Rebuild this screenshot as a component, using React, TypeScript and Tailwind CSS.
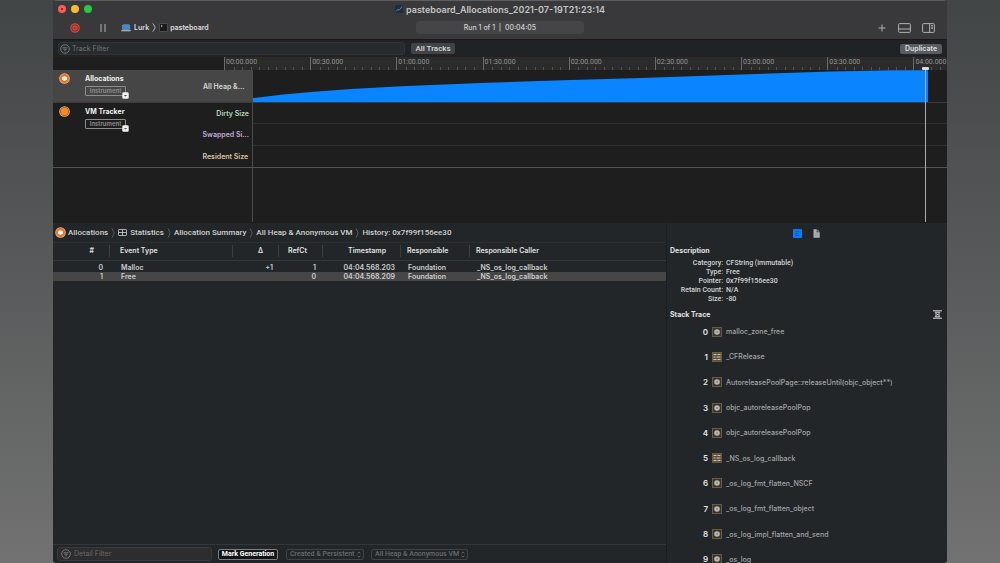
import React from "react";

type Frame = { symbol: string; kind: "system" | "library" };

const frames: Frame[] = [
  { symbol: "malloc_zone_free", kind: "system" },
  { symbol: "_CFRelease", kind: "library" },
  { symbol: "AutoreleasePoolPage::releaseUntil(objc_object**)", kind: "system" },
  { symbol: "objc_autoreleasePoolPop", kind: "system" },
  { symbol: "objc_autoreleasePoolPop", kind: "system" },
  { symbol: "_NS_os_log_callback", kind: "library" },
  { symbol: "_os_log_fmt_flatten_NSCF", kind: "system" },
  { symbol: "_os_log_fmt_flatten_object", kind: "system" },
  { symbol: "_os_log_impl_flatten_and_send", kind: "system" },
  { symbol: "_os_log", kind: "system" },
];

const marks = [
  "00:00.000",
  "00:30.000",
  "01:00.000",
  "01:30.000",
  "02:00.000",
  "02:30.000",
  "03:00.000",
  "03:30.000",
  "04:00.000",
];

const details = [
  ["Category:", "CFString (immutable)"],
  ["Type:", "Free"],
  ["Pointer:", "0x7f99f156ee30"],
  ["Retain Count:", "N/A"],
  ["Size:", "-80"],
];

const events = [
  { id: 0, type: "Malloc", delta: "+1", ref: 1, time: "04:04.568.203", lib: "Foundation", caller: "_NS_os_log_callback" },
  { id: 1, type: "Free", delta: "", ref: 0, time: "04:04.568.209", lib: "Foundation", caller: "_NS_os_log_callback" },
];

function FilterIcon() {
  return (
    <svg className="size-[10px] shrink-0" viewBox="0 0 10 10" fill="none" stroke="#87898b" strokeWidth="0.8" aria-hidden="true">
      <circle cx="5" cy="5" r="4.3" />
      <path d="M2.6 3.8h4.8M3.4 5.3h3.2M4.3 6.8h1.4" />
    </svg>
  );
}

function AllocationsIcon() {
  return (
    <svg className="size-[11px] shrink-0" viewBox="0 0 11 11" aria-hidden="true">
      <circle cx="5.5" cy="5.5" r="5.3" fill="#f3b27e" />
      <circle cx="5.5" cy="5.5" r="4.5" fill="#e27a30" />
      <path d="M5.5 3.2l2.4 1v2.5l-2.4 1.2-2.4-1.2V4.2z" fill="#fff3e6" />
    </svg>
  );
}

function TrackerIcon() {
  return (
    <svg className="size-[11px] shrink-0" viewBox="0 0 11 11" aria-hidden="true">
      <circle cx="5.5" cy="5.5" r="5.3" fill="#f5b784" />
      <circle cx="5.5" cy="5.5" r="4.5" fill="#9a5418" />
      <circle cx="5.5" cy="5.5" r="3.8" fill="#f98a1f" />
    </svg>
  );
}

function FrameIcon({ kind }: { kind: Frame["kind"] }) {
  return (
    <svg className="size-[10px] shrink-0" viewBox="0 0 10 10" aria-hidden="true">
      <rect x="0.5" y="0.5" width="9" height="9" fill={kind === "system" ? "#3a352c" : "#5d5238"} stroke="#6f6144" strokeWidth="0.9" />
      {kind === "system" ? (
        <>
          <circle cx="5" cy="5" r="2.8" fill="#b9b8b5" />
          <circle cx="5" cy="5" r="0.8" fill="#6b675f" />
        </>
      ) : (
        <path d="M1.5 2.5h3M5.5 2.5h3M1.5 5h2M4.5 5h4M1.5 7.5h3M5.5 7.5h3" stroke="#c9c4b4" strokeWidth="1.1" />
      )}
    </svg>
  );
}

function Chevron() {
  return (
    <svg className="h-[10px] w-[4px] shrink-0" viewBox="0 0 4 10" fill="none" stroke="#6c6e70" strokeWidth="0.8" aria-hidden="true">
      <path d="M1 0.5C2.4 3 3 4 3 5S2.4 7 1 9.5" />
    </svg>
  );
}

function InstrumentBadge() {
  return (
    <button type="button" className="relative flex h-[10px] w-[41px] items-center justify-center rounded-[1px] border border-[#8d8d8d] text-[6px] leading-none font-semibold text-[#8f8f8f]">
      Instrument
      <svg className="absolute -right-[4px] -bottom-[4px] size-[7px]" viewBox="0 0 7 7" aria-hidden="true">
        <rect x="0.3" y="0.3" width="6.4" height="6.4" rx="1.3" fill="#f1f1f1" />
        <path d="M1.8 2.9h3.4L3.5 4.4z" fill="#555" />
      </svg>
    </button>
  );
}

function Popup({ label, option, width }: { label: string; option: string; width: string }) {
  return (
    <div className={`relative flex h-[11px] items-center rounded-[2px] border border-[#404346] ${width}`}>
      <select aria-label={label} className="h-full w-full appearance-none bg-transparent pl-[3px] font-[Roboto,'Liberation_Sans',sans-serif] text-[7px] leading-none font-medium text-[#686b6d] outline-none">
        <option>{option}</option>
      </select>
      <svg className="pointer-events-none absolute right-[2px] h-[7px] w-[4px]" viewBox="0 0 4 7" fill="none" stroke="#707375" strokeWidth="0.8" aria-hidden="true">
        <path d="M0.6 2.4L2 0.9l1.4 1.5M0.6 4.6L2 6.1l1.4-1.5" />
      </svg>
    </div>
  );
}

function Toolbar() {
  return (
    <header className="shrink-0 border-t border-[#5e5f60] bg-[#39393b]">
      <div className="grid h-[16px] grid-cols-[1fr_auto_1fr] items-center">
        <div className="flex gap-[5px] pl-[5px]">
          <button type="button" aria-label="Close" className="flex size-[8px] items-center justify-center rounded-full bg-[#fc5b57]">
            <span className="size-[2px] rounded-full bg-[#7e1512]" />
          </button>
          <button type="button" aria-label="Minimize" className="size-[8px] rounded-full bg-[#fdbb2f]" />
          <button type="button" aria-label="Zoom" className="size-[8px] rounded-full bg-[#29c840]" />
        </div>
        <h1 className="flex items-center gap-[3px] text-[9px] leading-none font-semibold text-[#c4c4c5]">
          <svg className="size-[8px]" viewBox="0 0 8 8" aria-hidden="true">
            <rect width="8" height="8" rx="1" fill="#1d2e38" />
            <path d="M1 6.4l1.8-2 1.4.8L7 1.5" fill="none" stroke="#4b93b8" strokeWidth="0.9" />
          </svg>
          pasteboard_Allocations_2021-07-19T21:23:14
        </h1>
      </div>
      <div className="grid h-[22px] grid-cols-[1fr_168px_1fr] items-start pt-[4px]">
        <div className="flex h-[13px] items-center pl-[17px]">
          <button type="button" aria-label="Record">
            <svg className="size-[10px]" viewBox="0 0 10 10" fill="none" stroke="#e0443e" aria-hidden="true">
              <circle cx="5" cy="5" r="4.2" strokeWidth="1.2" />
              <circle cx="5" cy="5" r="2.1" fill="#b53a36" strokeWidth="1.2" />
            </svg>
          </button>
          <button type="button" aria-label="Pause" className="ml-[20px] flex h-[8px] w-[6px] justify-between">
            <span className="h-full w-[2px] bg-[#747476]" />
            <span className="h-full w-[2px] bg-[#747476]" />
          </button>
          <div className="ml-[15px] flex items-center text-[7px] leading-none font-semibold text-[#dededf]">
            <svg className="h-[8px] w-[10px]" viewBox="0 0 10 8" aria-hidden="true">
              <rect x="1.6" y="0.8" width="7" height="5" rx="0.5" fill="#3d86d0" stroke="#8bb0d4" strokeWidth="0.5" />
              <path d="M0 6.2h10l-.6 1H.6z" fill="#c9cfd6" />
            </svg>
            <span className="ml-[3px]">Lurk</span>
            <svg className="ml-[3px] h-[9px] w-[4px]" viewBox="0 0 4 9" fill="none" stroke="#c8c8c8" strokeWidth="0.9" aria-hidden="true">
              <path d="M0.8 0.4C2.2 2.6 3 3.6 3 4.5S2.2 6.4 0.8 8.6" />
            </svg>
            <svg className="ml-[3px] size-[9px]" viewBox="0 0 9 9" aria-hidden="true">
              <rect x="0.4" y="0.4" width="8.2" height="8.2" rx="1" fill="#1b1b1c" stroke="#6f6f70" strokeWidth="0.6" />
              <path d="M2 2l1.3 1L2 4" fill="none" stroke="#ddd" strokeWidth="0.7" />
            </svg>
            <span className="ml-[2px]">pasteboard</span>
          </div>
        </div>
        <div className="flex h-[13px] items-center justify-center rounded-[3px] bg-[#454547] text-[7px] leading-none font-medium text-[#d2d2d3]">
          Run 1 of 1&nbsp; |&nbsp; 00:04:05
        </div>
        <div className="flex h-[13px] items-center justify-end pr-[12px] text-[#bdbdbe]">
          <button type="button" aria-label="Add">
            <svg className="size-[8px]" viewBox="0 0 8 8" stroke="currentColor" strokeWidth="0.9" aria-hidden="true">
              <path d="M4 0.5v7M0.5 4h7" />
            </svg>
          </button>
          <button type="button" aria-label="Toggle detail area" className="ml-[12px]">
            <svg className="h-[10px] w-[13px]" viewBox="0 0 13 10" fill="none" stroke="currentColor" strokeWidth="0.9" aria-hidden="true">
              <rect x="0.6" y="0.6" width="11.8" height="8.8" rx="1" />
              <path d="M0.6 6h11.8" />
            </svg>
          </button>
          <button type="button" aria-label="Toggle inspector" className="ml-[11px]">
            <svg className="h-[10px] w-[13px]" viewBox="0 0 13 10" fill="none" stroke="currentColor" strokeWidth="0.9" aria-hidden="true">
              <rect x="0.6" y="0.6" width="11.8" height="8.8" rx="1" />
              <path d="M7.6 0.6v8.8M9.2 2.6h1.8M9.2 4h1.8M9.2 5.4h1.8" />
            </svg>
          </button>
        </div>
      </div>
    </header>
  );
}

function FilterBar() {
  return (
    <div className="flex h-[18px] shrink-0 items-center border-t border-[#161819] bg-[#1f2326] pr-[5px] pl-[5px] text-[8px] leading-none">
      <label className="flex h-[13px] w-[347px] items-center gap-[2px] rounded-[3px] border border-[#313538] bg-[#272b2e] pl-[1px]">
        <FilterIcon />
        <input aria-label="Track Filter" placeholder="Track Filter" className="min-w-0 flex-1 bg-transparent text-[7px] text-[#c0c0c0] outline-none placeholder:text-[#76797b]" />
      </label>
      <button type="button" className="ml-[6px] h-[11px] w-[44px] rounded-[2px] bg-[#414447] font-[Roboto,'Liberation_Sans',sans-serif] font-medium text-[#d8d8d9]">
        All Tracks
      </button>
      <button type="button" className="ml-auto h-[10px] w-[42px] rounded-[2px] bg-[#595c60] text-[7px] font-semibold text-[#dedfe0]">
        Duplicate
      </button>
    </div>
  );
}

function Ruler() {
  return (
    <div className="ml-[171px] flex h-[13px] shrink-0 overflow-hidden bg-[#2b2b2c]">
      {marks.map((mark) => (
        <div key={mark} className="flex w-[11.92%] shrink-0 flex-col justify-between border-l border-[#6a6a6a]">
          <span className="pl-[1px] font-[Roboto,'Liberation_Sans',sans-serif] text-[7px] leading-[10px] text-[#949495]">{mark}</span>
          <div className="flex h-[3px]">
            {Array.from({ length: 10 }, (_, i) => (
              <span key={i} className="flex-1 border-l border-[#565657] first:border-transparent" />
            ))}
          </div>
        </div>
      ))}
    </div>
  );
}

function Tracks() {
  return (
    <section aria-label="Tracks" className="relative flex h-[152px] shrink-0 flex-col bg-[#1e1e1e] text-[7px] leading-none font-semibold">
      <div className="grid h-[33px] grid-cols-[199px_1fr] border-b border-[#3c3c3c]">
        <div className="flex bg-[#464646] pl-[6px]">
          <div className="pt-[3px]">
            <AllocationsIcon />
          </div>
          <div className="ml-[15px] pt-[5px]">
            <h2 className="mb-[4px] font-bold text-[#f0f0f0]">Allocations</h2>
            <InstrumentBadge />
          </div>
          <span className="ml-auto w-[49px] self-center text-[#d6d6d6]">All Heap &amp;...</span>
        </div>
        <svg className="h-full w-full border-l border-[#4c4c4c]" viewBox="0 0 694 32" preserveAspectRatio="none" aria-label="All heap and anonymous VM usage">
          <path d="M0 28L30 24.6L58 22L98 19L148 16.3L228 13L318 10L388 7.9L488 4.4L578 1.4L640 0.3H675V32H0z" fill="#0a84ff" />
        </svg>
      </div>
      <div className="grid h-[65px] grid-cols-[199px_1fr] border-b border-[#555]">
        <div className="flex pl-[6px]">
          <div className="pt-[3px]">
            <TrackerIcon />
          </div>
          <div className="ml-[15px] pt-[5px]">
            <h2 className="mb-[4px] font-bold text-[#f0f0f0]">VM Tracker</h2>
            <InstrumentBadge />
          </div>
          <ul className="ml-auto grid grid-rows-3 items-center pr-[3px] text-left">
            <li className="text-right text-[#b1d9b4]">Dirty Size</li>
            <li className="text-[#c3addb]">Swapped Si...</li>
            <li className="text-[#dcc3a0]">Resident Size</li>
          </ul>
        </div>
        <div className="grid grid-rows-3 divide-y divide-[#303030] border-l border-[#4c4c4c]">
          <div />
          <div />
          <div />
        </div>
      </div>
      <div className="ml-[199px] flex-1 border-l border-[#4c4c4c]" />
      <div className="absolute -top-[3px] right-[2%] bottom-0 flex w-[7px] flex-col items-center">
        <span className="h-[3px] w-[7px] rounded-[1px] bg-[#dcdcdc]" />
        <span className="w-[1px] flex-1 bg-[#a9adb1]" />
      </div>
    </section>
  );
}

function Breadcrumbs() {
  return (
    <nav aria-label="Detail path" className="flex h-[20px] shrink-0 items-center gap-[3px] border-b border-[#2b2f32] pl-[2px] font-[Roboto,'Liberation_Sans',sans-serif] text-[8px] leading-none font-medium whitespace-nowrap text-[#cfd0d1]">
      <a href="#allocations" className="flex items-center gap-[2px]">
        <AllocationsIcon />
        Allocations
      </a>
      <Chevron />
      <a href="#statistics" className="flex items-center gap-[3px]">
        <svg className="h-[7px] w-[9px]" viewBox="0 0 9 7" fill="none" stroke="#cfd0d1" strokeWidth="0.8" aria-hidden="true">
          <rect x="0.5" y="0.5" width="8" height="6" rx="0.6" />
          <path d="M0.5 3.5h8M4.5 0.5v6" />
        </svg>
        Statistics
      </a>
      <Chevron />
      <a href="#summary">Allocation Summary</a>
      <Chevron />
      <a href="#heap">All Heap &amp; Anonymous VM</a>
      <Chevron />
      <a href="#history" aria-current="page">History: 0x7f99f156ee30</a>
    </nav>
  );
}

function EventTable() {
  return (
    <table className="w-full table-fixed border-collapse text-[7px] font-semibold text-[#cdcecf]">
      <colgroup>
        <col className="w-[57px]" />
        <col className="w-[123px]" />
        <col className="w-[46px]" />
        <col className="w-[44px]" />
        <col className="w-[78px]" />
        <col className="w-[69px]" />
        <col />
      </colgroup>
      <thead>
        <tr className="h-[17px] border-b border-[#36393b] leading-[12px] text-[#e0e1e2] [&>th]:p-0 [&>th]:font-semibold [&_span]:block [&_span]:border-r [&_span]:border-[#3b3f42]">
          <th><span className="pr-[15px] text-right">#</span></th>
          <th><span className="pl-[10px] text-left">Event Type</span></th>
          <th><span className="pl-[10px] text-center">Δ</span></th>
          <th><span className="pl-[9px] text-left">RefCt</span></th>
          <th><span className="pr-[14px] text-right">Timestamp</span></th>
          <th><span className="pl-[6px] text-left">Responsible</span></th>
          <th className="pl-[6px]! text-left">Responsible Caller</th>
        </tr>
      </thead>
      <tbody className="leading-[9px]">
        <tr aria-hidden="true" className="h-[3px]"><td colSpan={7} className="p-0" /></tr>
        {events.map((e) => (
          <tr key={e.id} className="odd:bg-[#464646] [&>td]:p-0">
            <td className="pr-[7px]! text-right">{e.id}</td>
            <td className="pl-[11px]!">{e.type}</td>
            <td className="pr-[6px]! text-right">{e.delta}</td>
            <td className="pr-[7px]! text-right">{e.ref}</td>
            <td className="pr-[6px]! text-right">{e.time}</td>
            <td className="pl-[7px]!">{e.lib}</td>
            <td className="pl-[7px]!">{e.caller}</td>
          </tr>
        ))}
      </tbody>
    </table>
  );
}

function DetailFooter() {
  return (
    <footer className="mt-auto flex h-[19px] shrink-0 items-center border-t border-[#33373a] pl-[4px]">
      <label className="flex h-[14px] w-[155px] items-center gap-[3px] rounded-[3px] border border-[#3a3b3c] bg-[#2d2d2e] pl-[3px]">
        <FilterIcon />
        <input aria-label="Detail Filter" placeholder="Detail Filter" className="min-w-0 flex-1 bg-transparent text-[7px] text-[#c0c0c0] outline-none placeholder:text-[#696a6b]" />
      </label>
      <button type="button" className="ml-[6px] h-[11px] w-[60px] rounded-[2px] border border-[#7b7f82] bg-[#121415] font-[Roboto,'Liberation_Sans',sans-serif] text-[7px] leading-none font-bold text-white">
        Mark Generation
      </button>
      <div className="ml-[8px] flex gap-[7px]">
        <Popup label="Lifespan" option="Created & Persistent" width="w-[78px]" />
        <Popup label="Allocation type" option="All Heap & Anonymous VM" width="w-[97px]" />
      </div>
    </footer>
  );
}

function Inspector() {
  return (
    <aside className="flex min-h-0 flex-col overflow-hidden border-l border-[#1b1e20] text-[7px] font-medium text-[#d3d4d5]">
      <div className="flex h-[20px] shrink-0 items-center justify-center gap-[11px] pr-[2px]">
        <button type="button" aria-label="Extended detail" className="flex size-[9px] items-center justify-center rounded-[1px] bg-[#0a7cf5]">
          <svg className="size-[7px]" viewBox="0 0 7 7" stroke="#0b57b0" strokeWidth="0.8" aria-hidden="true">
            <path d="M2 1.5h3M2 3.5h2.4M2 5.5h3M2 1.5v4" />
          </svg>
        </button>
        <button type="button" aria-label="Run info">
          <svg className="h-[9px] w-[7px]" viewBox="0 0 7 9" aria-hidden="true">
            <path d="M0.5 0.3h3.2v2.9h3v5.5H0.5z" fill="#b0b1b2" />
            <path d="M4.4 0.5l2.2 2H4.4z" fill="#b0b1b2" />
            <path d="M1.8 5h3.5M1.8 6.6h3.5" stroke="#8d8f90" strokeWidth="0.6" />
          </svg>
        </button>
      </div>
      <h2 className="mt-[3px] pl-[3px] leading-[10px] font-bold text-[#e0e1e2]">Description</h2>
      <dl className="mt-[3px] grid grid-cols-[56px_1fr] gap-x-[3px] font-[Roboto,'Liberation_Sans',sans-serif] leading-[9px]">
        {details.map(([term, value]) => (
          <React.Fragment key={term}>
            <dt className="text-right">{term}</dt>
            <dd>{value}</dd>
          </React.Fragment>
        ))}
      </dl>
      <div className="mt-[6px] flex h-[9px] shrink-0 items-center justify-between pr-[5px] pl-[3px]">
        <h2 className="leading-[10px] font-bold text-[#e0e1e2]">Stack Trace</h2>
        <button type="button" aria-label="Collapse frames">
          <svg className="size-[9px]" viewBox="0 0 9 9" fill="none" stroke="#d5d6d7" strokeWidth="1" aria-hidden="true">
            <path d="M0 0.8h9M0 8.2h9M1.8 2.2h5.4M1.8 6.8h5.4M3 2.5v4M6 2.5v4" />
            <circle cx="4.5" cy="4.5" r="0.8" fill="#d5d6d7" stroke="none" />
          </svg>
        </button>
      </div>
      <ol className="grid h-[253px] shrink-0 auto-rows-fr leading-[10px]">
        {frames.map((frame, i) => (
          <li key={i} className="flex items-center">
            <span className="w-[41px] text-right text-[8px] font-semibold text-[#e4e5e6]">{i}</span>
            <span className="mx-[4px]"><FrameIcon kind={frame.kind} /></span>
            <span className="pt-[1px] text-[#a2a5a7]">{frame.symbol}</span>
          </li>
        ))}
      </ol>
    </aside>
  );
}

export default function App() {
  return (
    <div className="h-screen overflow-hidden bg-linear-to-b from-[#424546] to-[#727272] px-[5.3%] font-[Inter,'Liberation_Sans',sans-serif]">
      <main className="flex h-full flex-col overflow-hidden rounded-[4px] bg-[#1e1e1e]">
        <Toolbar />
        <FilterBar />
        <Ruler />
        <Tracks />
        <div className="grid min-h-0 flex-1 grid-cols-[613fr_281fr] grid-rows-[minmax(0,1fr)] border-t border-[#1a1c1d] bg-[#222629]">
          <section aria-label="Detail" className="flex min-w-0 flex-col">
            <Breadcrumbs />
            <EventTable />
            <DetailFooter />
          </section>
          <Inspector />
        </div>
      </main>
    </div>
  );
}
